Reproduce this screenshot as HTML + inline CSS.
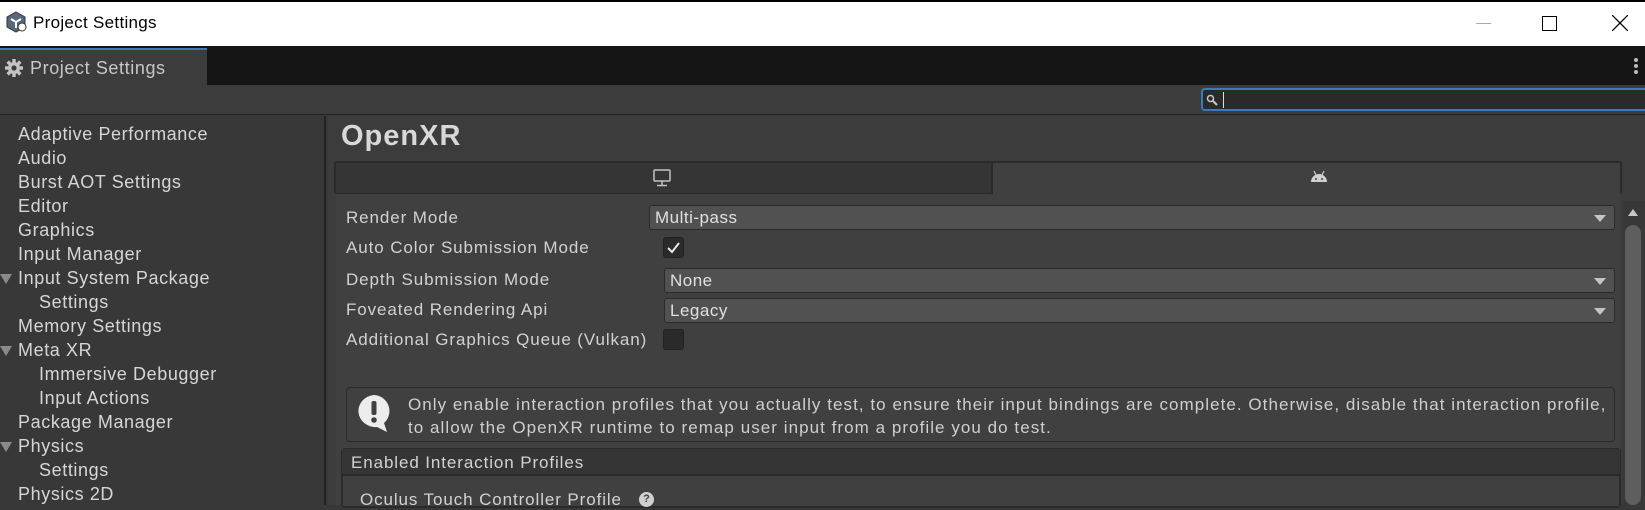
<!DOCTYPE html>
<html><head><meta charset="utf-8"><style>
*{margin:0;padding:0;box-sizing:border-box}
body{width:1645px;height:505px;overflow:hidden;background:#383838;font-family:"Liberation Sans",sans-serif;position:relative;color:#d2d2d2}
.a{position:absolute}
.t{white-space:nowrap;font-size:17px;letter-spacing:.9px}
.side .t{font-size:18px;color:#d6d6d6;letter-spacing:.6px}
.tri{width:0;height:0;border-left:6px solid transparent;border-right:6px solid transparent;border-top:10px solid #8a8a8a}
.dd{background:#515151;border:1px solid #2a2a2a;border-radius:3px;height:25px}
.dd span{position:absolute;left:5px;top:2px;font-size:17px;color:#e0e0e0;letter-spacing:.5px}
.arr{position:absolute;right:8px;top:9px;border-left:6px solid transparent;border-right:6px solid transparent;border-top:7px solid #c4c4c4}
.cb{width:21px;height:21px;background:#2a2a2a;border:1px solid #222;border-radius:3px}
</style></head><body>
<div class="a" style="left:0;top:0;width:1645px;height:46px;background:#fff;border-top:2px solid #000"></div>
<svg class="a" style="left:6px;top:11px" width="21" height="22" viewBox="0 0 21 22"><path d="M10 1 L19 6 L19 16 L10 21 L1 16 L1 6Z" fill="#59677a" stroke="#2c3440"/><path d="M5 8 L10 11 L15 8 M10 11 L10 17" stroke="#fff" stroke-width="2" fill="none"/><circle cx="16" cy="16" r="4" fill="#fff" stroke="#333"/></svg>
<div class="a t" style="left:33px;top:13px;font-size:17px;color:#000;letter-spacing:.3px">Project Settings</div>
<div class="a" style="left:1476px;top:23px;width:15px;height:1px;background:#aaa"></div>
<div class="a" style="left:1542px;top:16px;width:15px;height:15px;border:1.5px solid #000"></div>
<svg class="a" style="left:1612px;top:15px" width="16" height="16"><path d="M0 0L16 16M16 0L0 16" stroke="#000" stroke-width="1.3"/></svg>
<div class="a" style="left:0;top:46px;width:1645px;height:39px;background:#151515"></div>
<div class="a" style="left:0;top:48px;width:207px;height:37px;background:#3c3c3c;border-top:2px solid #3a79bb"></div>
<svg class="a" style="left:5px;top:59px" width="18" height="18" viewBox="0 0 18 18"><g fill="#c4c4c4"><circle cx="9" cy="9" r="6"/><rect x="7.3" y="0" width="3.4" height="18"/><rect x="0" y="7.3" width="18" height="3.4"/><rect x="7.3" y="0" width="3.4" height="18" transform="rotate(45 9 9)"/><rect x="7.3" y="0" width="3.4" height="18" transform="rotate(-45 9 9)"/></g><circle cx="9" cy="9" r="2.6" fill="#3c3c3c"/></svg>
<div class="a t" style="left:30px;top:58px;font-size:18px;color:#c8c8c8;letter-spacing:.6px">Project Settings</div>
<div class="a" style="left:1634px;top:58px;width:4px;height:4px;background:#bbb;border-radius:2px;box-shadow:0 6px #bbb,0 12px #bbb"></div>
<div class="a" style="left:0;top:85px;width:1645px;height:30px;background:#3c3c3c;border-bottom:1px solid #242424"></div>
<div class="a" style="left:1201px;top:88px;width:450px;height:23px;background:#2a2a2a;border:2px solid #3a79bb;border-radius:4px"></div>
<svg class="a" style="left:1206px;top:94px" width="12" height="12"><circle cx="4.5" cy="4.5" r="3" fill="none" stroke="#c8c8c8" stroke-width="1.5"/><path d="M7 7L11 11" stroke="#c8c8c8" stroke-width="2"/></svg>
<div class="a" style="left:1223px;top:92px;width:1px;height:16px;background:#ddd"></div>
<div class="a" style="left:0;top:116px;width:326px;height:389px;background:#383838;border-right:2px solid #232323"></div>
<div class="side">
<div class="a t" style="left:18px;top:124px">Adaptive Performance</div>
<div class="a t" style="left:18px;top:148px">Audio</div>
<div class="a t" style="left:18px;top:172px">Burst AOT Settings</div>
<div class="a t" style="left:18px;top:196px">Editor</div>
<div class="a t" style="left:18px;top:220px">Graphics</div>
<div class="a t" style="left:18px;top:244px">Input Manager</div>
<div class="a tri" style="left:0;top:274px"></div>
<div class="a t" style="left:18px;top:268px">Input System Package</div>
<div class="a t" style="left:39px;top:292px">Settings</div>
<div class="a t" style="left:18px;top:316px">Memory Settings</div>
<div class="a tri" style="left:0;top:346px"></div>
<div class="a t" style="left:18px;top:340px">Meta XR</div>
<div class="a t" style="left:39px;top:364px">Immersive Debugger</div>
<div class="a t" style="left:39px;top:388px">Input Actions</div>
<div class="a t" style="left:18px;top:412px">Package Manager</div>
<div class="a tri" style="left:0;top:442px"></div>
<div class="a t" style="left:18px;top:436px">Physics</div>
<div class="a t" style="left:39px;top:460px">Settings</div>
<div class="a t" style="left:18px;top:484px">Physics 2D</div>
</div>
<div class="a" style="left:328px;top:116px;width:1317px;height:389px;background:#3c3c3c"></div>
<div class="a t" style="left:341px;top:120px;font-size:29px;font-weight:bold;color:#d8d8d8;letter-spacing:1px">OpenXR</div>
<div class="a" style="left:334px;top:161px;width:1288px;height:33px;background:#2a2a2a;border-radius:3px"></div>
<div class="a" style="left:336px;top:163px;width:655px;height:30px;background:#353535"></div>
<div class="a" style="left:993px;top:163px;width:627px;height:31px;background:#404040"></div>
<svg class="a" style="left:652px;top:168px" width="20" height="20"><rect x="2" y="2" width="16" height="11" rx="1" fill="none" stroke="#c4c4c4" stroke-width="1.5"/><path d="M10 13V17M5 17.5H15" stroke="#c4c4c4" stroke-width="1.5"/></svg>
<svg class="a" style="left:1309px;top:170px" width="20" height="14"><path d="M2 12A8 8 0 0 1 18 12Z" fill="#d0d0d0"/><path d="M5 1L7 5M15 1L13 5" stroke="#d0d0d0" stroke-width="1.2"/><circle cx="7" cy="9" r="1" fill="#404040"/><circle cx="13" cy="9" r="1" fill="#404040"/></svg>
<div class="a" style="left:336px;top:194px;width:1284px;height:311px;background:#404040"></div>
<div class="a" style="left:1623px;top:201px;width:22px;height:304px;background:#383838"></div>
<div class="a" style="left:1628px;top:209px;border-left:5px solid transparent;border-right:5px solid transparent;border-bottom:7px solid #c8c8c8"></div>
<div class="a" style="left:1625px;top:225px;width:16px;height:280px;background:#5e5e5e;border-radius:8px"></div>
<div class="a t" style="left:346px;top:208px">Render Mode</div>
<div class="a dd" style="left:649px;top:205px;width:966px"><span>Multi-pass</span><i class="arr"></i></div>
<div class="a t" style="left:346px;top:238px">Auto Color Submission Mode</div>
<div class="a cb" style="left:663px;top:237px"></div>
<svg class="a" style="left:666px;top:240px" width="15" height="15"><path d="M2 8L6 12L13 3" stroke="#e8e8e8" stroke-width="2" fill="none"/></svg>
<div class="a t" style="left:346px;top:270px">Depth Submission Mode</div>
<div class="a dd" style="left:664px;top:268px;width:951px"><span>None</span><i class="arr"></i></div>
<div class="a t" style="left:346px;top:300px">Foveated Rendering Api</div>
<div class="a dd" style="left:664px;top:298px;width:951px"><span>Legacy</span><i class="arr"></i></div>
<div class="a t" style="left:346px;top:330px">Additional Graphics Queue (Vulkan)</div>
<div class="a cb" style="left:663px;top:329px"></div>
<div class="a" style="left:346px;top:387px;width:1269px;height:55px;background:#404040;border:1.5px solid #2a2a2a;border-radius:4px"></div>
<svg class="a" style="left:355px;top:393px" width="38" height="40" viewBox="0 0 38 40"><path d="M19 2A17 16 0 1 0 22 34L32 39L29 30A16 16 0 0 0 19 2Z" fill="#ededed"/><rect x="16.5" y="8" width="5" height="14" rx="2" fill="#404040"/><circle cx="19" cy="27" r="2.8" fill="#404040"/></svg>
<div class="a t" style="left:408px;top:395px;color:#cfcfcf;letter-spacing:1.05px">Only enable interaction profiles that you actually test, to ensure their input bindings are complete. Otherwise, disable that interaction profile,</div>
<div class="a t" style="left:408px;top:418px;color:#cfcfcf;letter-spacing:1.05px">to allow the OpenXR runtime to remap user input from a profile you do test.</div>
<div class="a" style="left:341px;top:448px;width:1280px;height:60px;background:#2a2a2a;border-radius:4px"></div>
<div class="a" style="left:342px;top:449px;width:1278px;height:25px;background:#353535"></div>
<div class="a" style="left:343px;top:476px;width:1276px;height:30px;background:#404040"></div>
<div class="a t" style="left:351px;top:453px">Enabled Interaction Profiles</div>
<div class="a t" style="left:360px;top:490px">Oculus Touch Controller Profile</div>
<div class="a" style="left:639px;top:492px;width:15px;height:15px;border-radius:50%;background:#d0d0d0;font-size:11px;font-weight:bold;color:#404040;text-align:center;line-height:15px">?</div>
</body></html>
